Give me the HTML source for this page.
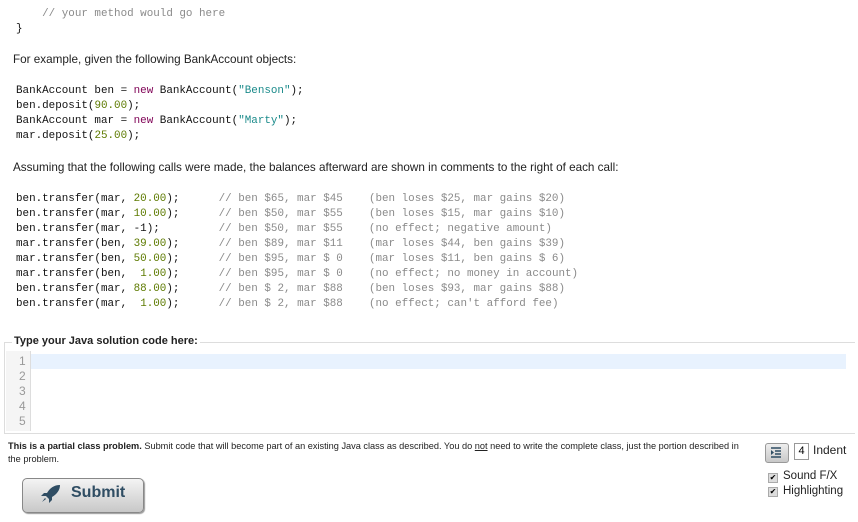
<!DOCTYPE html>
<html><head><meta charset="utf-8"><style>
body{margin:0;width:858px;height:522px;background:#fff;position:relative;overflow:hidden;font-family:"Liberation Sans",sans-serif;color:#000}
.m{position:absolute;font-family:"Liberation Mono",monospace;font-size:10.9px;line-height:15px;white-space:pre;color:#111;margin:0}
.c{color:#8a8a8a}.n{color:#5d7a00}.s{color:#1a8a8a}.k{color:#7f0055}
.t{position:absolute;font-size:11.7px;color:#222}
</style></head><body>
<pre class="m" style="left:16px;top:7px"><span class="c">    // your method would go here</span>
}</pre>
<div class="t" style="left:13px;top:53px">For example, given the following BankAccount objects:</div>
<pre class="m" style="left:16px;top:84px">BankAccount ben = <span class="k">new</span> BankAccount(<span class="s">"Benson"</span>);
ben.deposit(<span class="n">90.00</span>);
BankAccount mar = <span class="k">new</span> BankAccount(<span class="s">"Marty"</span>);
mar.deposit(<span class="n">25.00</span>);</pre>
<div class="t" style="left:13px;top:161px">Assuming that the following calls were made, the balances afterward are shown in comments to the right of each call:</div>
<pre class="m" style="left:16px;top:192px">ben.transfer(mar, <span class="n">20.00</span>);      <span class="c">// ben $65, mar $45    (ben loses $25, mar gains $20)</span>
ben.transfer(mar, <span class="n">10.00</span>);      <span class="c">// ben $50, mar $55    (ben loses $15, mar gains $10)</span>
ben.transfer(mar, -1);         <span class="c">// ben $50, mar $55    (no effect; negative amount)</span>
mar.transfer(ben, <span class="n">39.00</span>);      <span class="c">// ben $89, mar $11    (mar loses $44, ben gains $39)</span>
mar.transfer(ben, <span class="n">50.00</span>);      <span class="c">// ben $95, mar $ 0    (mar loses $11, ben gains $ 6)</span>
mar.transfer(ben,  <span class="n">1.00</span>);      <span class="c">// ben $95, mar $ 0    (no effect; no money in account)</span>
ben.transfer(mar, <span class="n">88.00</span>);      <span class="c">// ben $ 2, mar $88    (ben loses $93, mar gains $88)</span>
ben.transfer(mar,  <span class="n">1.00</span>);      <span class="c">// ben $ 2, mar $88    (no effect; can't afford fee)</span></pre>
<div style="position:absolute;left:4px;top:342px;width:850px;height:90px;border:1px solid #ddd;border-right:none"></div>
<div style="position:absolute;left:12px;top:335px;background:#fff;padding:0 2px;font-size:11px;font-weight:bold;color:#222">Type your Java solution code here:</div>
<div style="position:absolute;left:6px;top:351px;width:24px;height:80px;background:#f5f5f5;border-right:1px solid #ddd"></div>
<div style="position:absolute;left:31px;top:354px;width:815px;height:15px;background:#e8f2fe"></div>
<pre class="m" style="left:19px;top:354px;color:#999;font-family:'Liberation Sans',sans-serif;font-size:12px">1
2
3
4
5</pre>
<div style="position:absolute;left:8px;top:440px;width:740px;font-size:9.2px;line-height:12.5px;color:#222"><b>This is a partial class problem.</b> Submit code that will become part of an existing Java class as described. You do <u>not</u> need to write the complete class, just the portion described in the problem.</div>
<div style="position:absolute;left:22px;top:478px;width:120px;height:33px;border:1px solid #888;border-radius:5px;background:linear-gradient(#f4f4f4,#c8c8c8);box-shadow:1px 1px 1px #999"></div>
<svg style="position:absolute;left:40px;top:484px" width="22" height="20" viewBox="0 0 22 20"><path d="M20 1 C14 1 10 4 7 9 L4 9 L1 12 L6 12 L9 15 L9 19 L12 16 L12 13 C17 10 20 6 20 1Z" fill="#2f4d63"/><path d="M5 14 L2 18 L6 15Z" fill="#2f4d63"/></svg>
<div style="position:absolute;left:71px;top:484px;font-size:16px;font-weight:bold;color:#2f4d63">Submit</div>
<div style="position:absolute;left:765px;top:443px;width:22px;height:18px;border:1px solid #999;border-radius:3px;background:linear-gradient(#eee,#c8c8c8)"></div>
<svg style="position:absolute;left:770px;top:446px" width="12" height="12"><path d="M1 2h10M5 5h6M5 8h6M1 11h10" stroke="#2f4d63" stroke-width="1.6"/><path d="M1 4l3 2.5-3 2.5z" fill="#2f4d63"/></svg>
<div style="position:absolute;left:794px;top:443px;width:13px;height:15px;border:1px solid #999;font-size:11px;text-align:center;line-height:15px">4</div>
<div style="position:absolute;left:813px;top:443px;font-size:12px;color:#222">Indent</div>
<div style="position:absolute;left:768px;top:473px;width:8px;height:8px;border:1px solid #aaa;background:#ddd;font-size:8px;line-height:8px;text-align:center">✔</div>
<div style="position:absolute;left:783px;top:470px;font-size:11.5px;color:#222">Sound F/X</div>
<div style="position:absolute;left:768px;top:487px;width:8px;height:8px;border:1px solid #aaa;background:#ddd;font-size:8px;line-height:8px;text-align:center">✔</div>
<div style="position:absolute;left:783px;top:485px;font-size:11.5px;color:#222">Highlighting</div>
</body></html>
